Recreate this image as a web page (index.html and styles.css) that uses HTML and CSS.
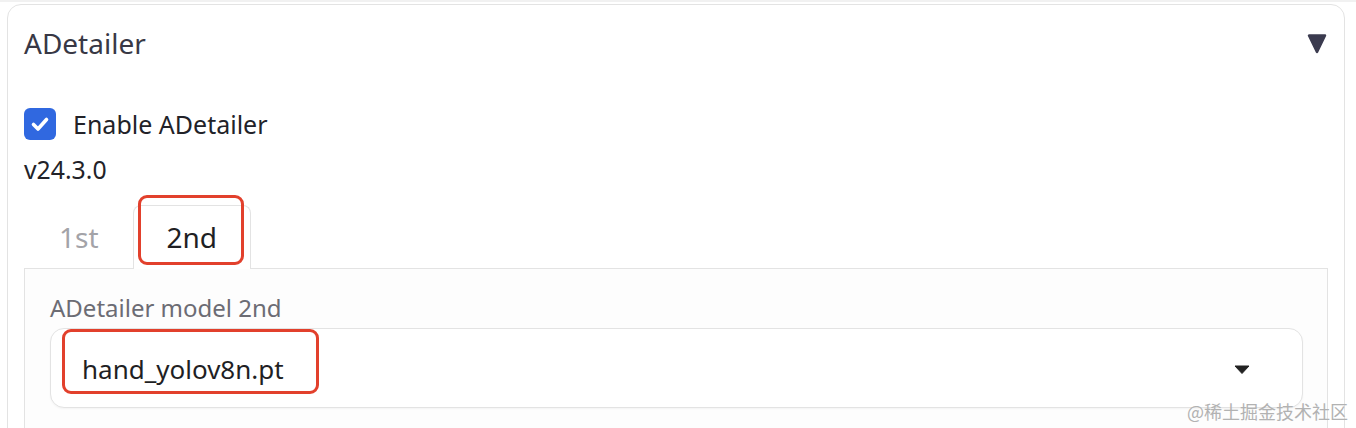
FILE: index.html
```html
<!DOCTYPE html>
<html lang="en">
<head>
<meta charset="utf-8">
<title>ADetailer</title>
<link rel="stylesheet" href="styles.css">
</head>
<body>
<div class="page">
  <section class="card">
    <header class="card-head">
      <h2 class="card-title">ADetailer</h2>
      <svg class="collapse-icon" width="20" height="21" viewBox="0 0 20 21" aria-hidden="true">
        <path d="M2 2.5 H18 L10 19 Z" fill="#3b3b4f" stroke="#3b3b4f" stroke-width="2.5" stroke-linejoin="round"/>
      </svg>
    </header>

    <label class="check-row">
      <span class="checkbox">
        <svg width="32" height="32" viewBox="0 0 32 32" aria-hidden="true">
          <path d="M9.5 16.5 L14 21 L22.5 11.5" fill="none" stroke="#fff" stroke-width="3.6" stroke-linecap="round" stroke-linejoin="round"/>
        </svg>
      </span>
      <span class="check-label">Enable ADetailer</span>
    </label>

    <div class="version">v24.3.0</div>

    <div class="tabs">
      <nav class="tab-nav">
        <button class="tab">1st</button>
        <button class="tab tab-active">2nd<span class="annot annot-tab"></span></button>
      </nav>
      <div class="tab-panel">
        <div class="field-label">ADetailer model 2nd</div>
        <div class="dropdown">
          <span class="dropdown-value">hand_yolov8n.pt</span>
          <svg class="dropdown-arrow" width="16" height="9" viewBox="0 0 16 9" aria-hidden="true">
            <path d="M1 1 H15 L8 8.5 Z" fill="#222" stroke="#222" stroke-width="1" stroke-linejoin="round"/>
          </svg>
          <span class="annot annot-value"></span>
        </div>
      </div>
    </div>
  </section>
  <div class="watermark">@稀土掘金技术社区</div>
</div>
</body>
</html>
```

FILE: styles.css
```css
html, body {
  margin: 0;
  padding: 0;
  background: #ffffff;
  overflow: hidden;
}

body {
  font-family: "Noto Sans", "Liberation Sans", sans-serif;
  color: #1f1f24;
  height: 428px;
  border-top: 2px solid #f1f1f1;
  box-sizing: border-box;
}

.page {
  position: relative;
  height: 426px;
  padding: 2px 11px 0 7px;
  box-sizing: border-box;
}

.card {
  border: 1px solid #e3e3e3;
  border-radius: 14px;
  padding: 18px 16px 0 16px;
  height: 460px;
  box-sizing: border-box;
  background: #fff;
}

.card-head {
  display: flex;
  justify-content: space-between;
  align-items: center;
  height: 40px;
}

.card-title {
  margin: 0;
  font-size: 28px;
  font-weight: 400;
  line-height: 40px;
  color: #383845;
}

.collapse-icon {
  display: block;
  margin-right: 1px;
}

.check-row {
  display: flex;
  align-items: center;
  gap: 17px;
  margin-top: 45px;
  height: 32px;
}

.checkbox {
  width: 32px;
  height: 32px;
  border-radius: 6px;
  background: #3068e0;
  display: block;
  flex: none;
}

.checkbox svg {
  display: block;
}

.check-label {
  font-size: 25px;
  line-height: 32px;
  color: #222228;
}

.version {
  margin-top: 13px;
  font-size: 24.8px;
  line-height: 32px;
  color: #222228;
}

.tabs {
  margin-top: 20px;
}

.tab-nav {
  display: flex;
  gap: 0;
  padding-left: 1px;
}

.tab {
  font-family: inherit;
  font-size: 28px;
  line-height: 62px;
  padding: 0 33px;
  border: 1px solid transparent;
  border-bottom: none;
  background: transparent;
  color: #a3a3a8;
  border-radius: 8px 8px 0 0;
  margin: 0;
  cursor: pointer;
}

.tab-active {
  position: relative;
  z-index: 1;
  color: #1f1f24;
  background: #fff;
  border-color: #e3e3e3;
  margin-bottom: -1px;
  padding-bottom: 1px;
}

.tab-panel {
  border: 1px solid #e3e3e3;
  background: #fdfdfd;
  padding: 23px 24px 0 25px;
  height: 200px;
}

.field-label {
  font-size: 24px;
  line-height: 32px;
  color: #6c6c74;
}

.dropdown {
  position: relative;
  margin-top: 4px;
  height: 80px;
  box-sizing: border-box;
  border: 1px solid #e3e3e3;
  border-radius: 14px;
  background: #fff;
  box-shadow: 0 1px 2px rgba(0, 0, 0, 0.04);
  display: flex;
  align-items: center;
  justify-content: space-between;
  padding: 0 52px 0 31px;
}

.dropdown-value {
  font-size: 26px;
  line-height: 40px;
  color: #1f1f24;
  margin-top: 2px;
}

.dropdown-arrow {
  display: block;
  margin-top: 2px;
}

.annot {
  position: absolute;
  border: 3px solid #e2402c;
  border-radius: 9px;
  pointer-events: none;
}

.annot-tab {
  left: 4px;
  right: 6px;
  top: -11px;
  bottom: 4px;
}

.annot-value {
  left: 11px;
  top: 0;
  width: 257px;
  height: 65px;
  box-sizing: border-box;
}

.watermark {
  position: absolute;
  right: 8px;
  bottom: 6px;
  font-family: "Noto Sans CJK SC", "Noto Sans", sans-serif;
  font-size: 18px;
  line-height: 22px;
  color: #b2b2b2;
}
```
